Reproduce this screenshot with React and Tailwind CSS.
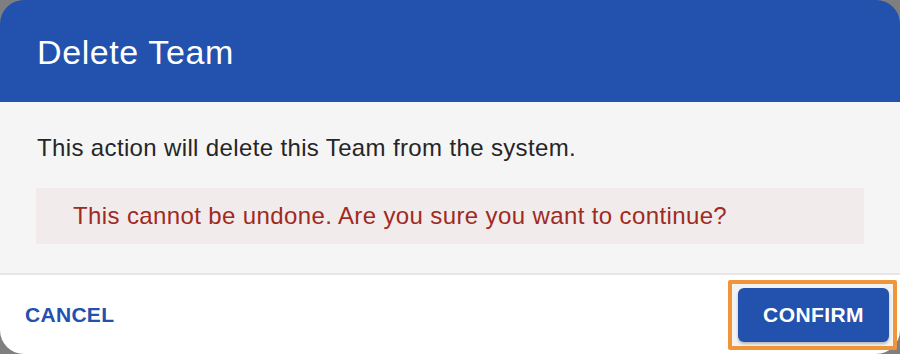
import React from "react";

const App = () => {
  return (
    <div
      className="w-[900px] h-[354px] bg-[#7f7f7f]"
      style={{ fontFamily: '"Liberation Sans", Arial, sans-serif' }}
    >
      <div className="flex flex-col w-full h-full">
        {/* header */}
        <div className="h-[102px] bg-[#2251ae] rounded-t-[24px] flex items-center pl-[37px] pt-[1px]">
          <h1 className="text-[34px] tracking-[0.6px] text-white leading-none">Delete Team</h1>
        </div>

        {/* body */}
        <div className="bg-[#f5f5f5] pt-[28px] pb-[29px] px-[36px] border-b-2 border-[#e6e6e6]">
          <p className="text-[24px] leading-[36px] tracking-[0.36px] text-[#262626] pl-[1px]">
            This action will delete this Team from the system.
          </p>
          <div className="mt-[22px] h-[56px] bg-[#f2ebeb] flex items-center pl-[37px]">
            <p className="text-[24px] tracking-[0.38px] text-[#9e2a22]">
              This cannot be undone. Are you sure you want to continue?
            </p>
          </div>
        </div>

        {/* footer */}
        <div className="flex-1 bg-white rounded-b-[24px] flex items-center justify-between pl-[25px] pr-[3px]">
          <button className="text-[21px] font-bold tracking-[0.3px] text-[#2251ae]">
            CANCEL
          </button>
          <div className="border-4 border-[#f0963a] rounded-[2px] pt-[4px] pb-[4px] pl-[6px] pr-[4px] bg-[#f3f3f3]">
            <button className="block w-[151px] h-[54px] rounded-[6px] bg-[#2251ae] text-white text-[21px] font-bold tracking-[0.4px] shadow-[0_2px_3px_rgba(0,0,0,0.25)]">
              CONFIRM
            </button>
          </div>
        </div>
      </div>
    </div>
  );
};

export default App;
